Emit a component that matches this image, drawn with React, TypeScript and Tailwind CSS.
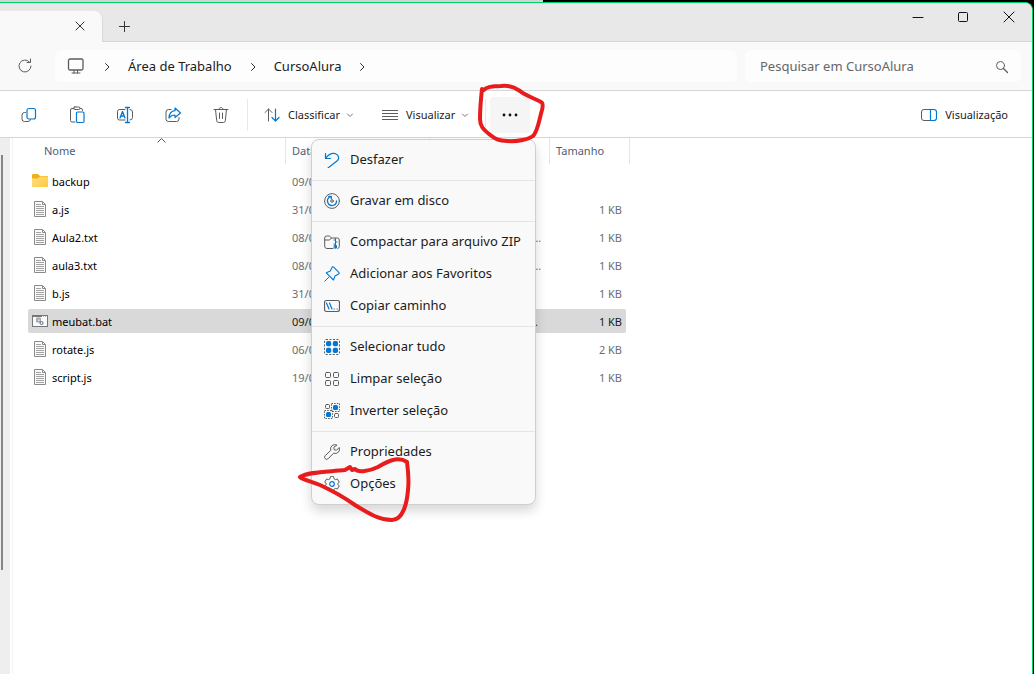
import React, { useState } from "react";

interface IconProps {
  children: React.ReactNode;
  size?: number;
}

const Icon: React.FC<IconProps> = ({ children, size = 18 }) => (
  <svg
    width={size}
    height={size}
    viewBox={`0 0 ${size} ${size}`}
    fill="none"
    stroke="#5c5c5c"
    strokeLinecap="round"
    strokeLinejoin="round"
    className="shrink-0"
    aria-hidden="true"
  >
    {children}
  </svg>
);

const BLUE = "#0078d4";

const CopyIcon = () => (
  <Icon>
    <path d="M5.500 6.500H4.500A2.500 2.500 0 0 0 2 9v4a2.500 2.500 0 0 0 2.500 2.500h3.500A2.500 2.500 0 0 0 10.500 13.500" />
    <rect x="7" y="2.500" width="8.500" height="10.500" rx="2" stroke={BLUE} strokeWidth="1.200" />
  </Icon>
);

const PasteIcon = () => (
  <Icon>
    <path d="M6 2.500H4A1.500 1.500 0 0 0 2.500 4v10.500A1.500 1.500 0 0 0 4 16h3M12 2.500h1A1.500 1.500 0 0 1 14.500 4v.5" />
    <rect x="5.500" y="1" width="6.500" height="2.500" rx="1.200" />
    <rect x="8.500" y="6" width="7.500" height="10.500" rx="1.200" stroke={BLUE} strokeWidth="1.200" />
  </Icon>
);

const RenameIcon = () => (
  <Icon>
    <path d="M9 3.500H3.500A2 2 0 0 0 1.500 5.500v6.500a2 2 0 0 0 2 2H9M14 3.500a2.500 2.500 0 0 1 2.500 2.500v5.500A2.500 2.500 0 0 1 14 14" />
    <path d="M4 12 6.500 5.500 9 12M4.800 10h3.400M11.500 1.500v15M9.500 1.500h4M9.500 16.500h4" stroke={BLUE} strokeWidth="1.300" />
  </Icon>
);

const ShareIcon = () => (
  <Icon>
    <path d="M7 3.500H4.500A2.500 2.500 0 0 0 2 6v7A2.500 2.500 0 0 0 4.500 15.500h8a2.500 2.500 0 0 0 2.500-2.500V11.500" />
    <path d="M11 2 16.500 7 11 11.500V9C8 9 6.500 10 5 12c.2-4 2.500-7 6-7.300z" stroke={BLUE} strokeWidth="1.200" />
  </Icon>
);

const TrashIcon = () => (
  <Icon>
    <path d="M2 3.500h14M7 3.300c0-2.500 4-2.500 4 0M3.500 3.500l1.200 11.200A2 2 0 0 0 6.700 16.500h4.600a2 2 0 0 0 2-1.800l1.200-11.200M7.500 7v5.500M10.500 7v5.500" />
  </Icon>
);

const SortIcon = () => (
  <Icon size={16}>
    <path d="M4.500 14V2M1 5.500 4.500 2 8 5.500" />
    <path d="M11.500 2v12M8 10.500l3.500 3.500L15 10.500" stroke={BLUE} strokeWidth="1.200" />
  </Icon>
);

const LinesIcon = () => (
  <Icon size={16}>
    <path d="M0 3.500h16M0 6.500h16M0 9.500h16M0 12.500h16" />
  </Icon>
);

const PreviewIcon = () => (
  <Icon size={16}>
    <path d="M10 2.500H3A2.500 2.500 0 0 0 .5 5v6A2.500 2.500 0 0 0 3 13.500h7" />
    <path d="M9.500 2.500H13A2.500 2.500 0 0 1 15.500 5v6a2.500 2.500 0 0 1-2.500 2.500H9.500z" stroke={BLUE} strokeWidth="1.200" />
  </Icon>
);

const ChevronDown = () => (
  <Icon size={8}>
    <path d="M1.500 3 4 5.500 6.500 3" stroke="#777" />
  </Icon>
);

const ChevronRight = () => (
  <Icon size={10}>
    <path d="M3.500 1.500 7 5 3.500 8.500" stroke="#333" />
  </Icon>
);

const UndoIcon = () => (
  <Icon size={16}>
    <path d="M1.500 1.500v5h5M1.700 6.300C4.500 2.500 8 .8 11.500 1.700c3.300 1 4 4.500 2 6.800L4 16" stroke={BLUE} strokeWidth="1.200" />
  </Icon>
);

const DiscIcon = () => (
  <Icon size={16}>
    <circle cx="8" cy="8" r="7.400" />
    <circle cx="8" cy="8" r="1.300" />
    <path d="M6 4A4.500 4.500 0 1 0 12.500 8M4.800 3.500h2.500v2.300" stroke={BLUE} strokeWidth="1.300" />
  </Icon>
);

const ZipIcon = () => (
  <Icon size={16}>
    <path d="M9 14.500H3A2.300 2.300 0 0 1 .7 12.200V4A2 2 0 0 1 2.700 2h2.600L7.500 4 5.600 6H.7M7.500 4H13.300a2 2 0 0 1 2 2v6.500a2 2 0 0 1-1.500 2" />
    <path d="M11.500 4.500V14M10 6h1.500M11.500 8H13M10 10h1.500M10.500 14h2v-2.500h-2z" stroke={BLUE} />
  </Icon>
);

const PinIcon = () => (
  <Icon size={16}>
    <path d="M5 11 .7 15.300" />
    <path d="M9.700 1.200 14.800 6.300c.6.600.4 1.500-.3 1.800L11 10l-1.500 4L2.300 6.800 6.300 5 8 1.500c.3-.7 1.100-.9 1.700-.3z" stroke={BLUE} strokeWidth="1.100" />
  </Icon>
);

const PathIcon = () => (
  <Icon size={16}>
    <rect x=".5" y="2.500" width="15" height="11" rx="2" strokeWidth="1.200" />
    <path d="M2.500 5 5 11M5.500 5 8 11M10 11h.3M13 11h.3" stroke={BLUE} strokeWidth="1.200" />
  </Icon>
);

const SelectAllIcon = () => (
  <Icon size={16}>
    <rect x=".5" y=".5" width="15" height="15" rx="1.500" strokeDasharray="2 1.500" strokeLinecap="butt" />
    <g fill={BLUE} stroke="none">
      <rect x="2" y="2" width="5.200" height="5.200" rx="1.800" />
      <rect x="8.800" y="2" width="5.200" height="5.200" rx="1.800" />
      <rect x="2" y="8.800" width="5.200" height="5.200" rx="1.800" />
      <rect x="8.800" y="8.800" width="5.200" height="5.200" rx="1.800" />
    </g>
  </Icon>
);

const SelectNoneIcon = () => (
  <Icon size={16}>
    <rect x="1.500" y="1.500" width="5" height="5" rx="1" />
    <rect x="9.500" y="1.500" width="5" height="5" rx="1" />
    <rect x="1.500" y="9.500" width="5" height="5" rx="1" />
    <rect x="9.500" y="9.500" width="5" height="5" rx="1" />
  </Icon>
);

const InvertIcon = () => (
  <Icon size={16}>
    <rect x="1.500" y="1.500" width="4" height="4" rx="1" />
    <rect x="10.500" y="10.500" width="4" height="4" rx="1" />
    <rect x="7.500" y=".5" width="8" height="8" strokeDasharray="1.500 1.200" strokeLinecap="butt" />
    <rect x=".5" y="7.500" width="8" height="8" strokeDasharray="1.500 1.200" strokeLinecap="butt" />
    <rect x="9" y="2" width="5" height="5" rx="1.500" fill={BLUE} stroke="none" />
    <rect x="2" y="9" width="5" height="5" rx="1.500" fill={BLUE} stroke="none" />
  </Icon>
);

const WrenchIcon = () => (
  <Icon size={16}>
    <path d="M12.700 1A4.300 4.300 0 0 0 6.800 6.300L1.200 11.700a2 2 0 0 0 2.900 3l5.600-5.500A4.300 4.300 0 0 0 15.200 3.500L12.500 6.200 10.200 5.800 9.900 3.600z" />
  </Icon>
);

const GearIcon = () => (
  <Icon size={16}>
    <path d="M6.500 .7 6 2.700 4.600 3.600 2.600 3 .7 6.200 2.200 7.400V8.600L.7 9.800 2.600 13 4.600 12.400 6 13.300 6.500 15.300H9.500L10 13.300 11.400 12.400 13.400 13 15.300 9.800 13.800 8.600V7.400L15.300 6.200 13.400 3 11.400 3.600 10 2.700 9.500 .7z" />
    <circle cx="8" cy="8" r="2.300" stroke={BLUE} strokeWidth="1.200" />
  </Icon>
);

const FolderIcon = () => (
  <svg width="16" height="16" viewBox="0 0 16 16" aria-hidden="true" className="shrink-0">
    <defs>
      <linearGradient id="folder" x1="0" y1="0" x2="1" y2="1">
        <stop offset="0" stopColor="#ffe08a" />
        <stop offset="1" stopColor="#ffc937" />
      </linearGradient>
    </defs>
    <path d="M0 2a1 1 0 0 1 1-1h5l2 2h7a1 1 0 0 1 1 1v4H0z" fill="#f4b012" />
    <path d="M0 5.500h6L8 3.500h7a1 1 0 0 1 1 1V13a1 1 0 0 1-1 1H1a1 1 0 0 1-1-1z" fill="url(#folder)" />
  </svg>
);

const FileIcon = () => (
  <svg width="16" height="16" viewBox="0 0 16 16" fill="none" aria-hidden="true" className="shrink-0">
    <path d="M2.500 .5h8l3 3v12h-11z" fill="#fafafa" stroke="#8a8a8a" />
    <path d="M10.500 .5v3h3" stroke="#8a8a8a" />
    <path d="M4 3.500h5M4 5.500h8M4 7.500h8M4 9.500h8M4 11.500h8M4 13.500h8" stroke="#a3a3a3" />
  </svg>
);

const BatIcon = () => (
  <svg width="16" height="16" viewBox="0 0 16 16" fill="none" aria-hidden="true" className="shrink-0">
    <rect x=".5" y="2.500" width="15" height="11" fill="#fafafa" stroke="#777" />
    <path d="M0 3h10" stroke="#777" strokeWidth="2" />
    <path d="M11 3h1M13 3h1" stroke="#777" />
    <rect x="4" y="4.500" width="5" height="5" rx="1" fill="#9eabb6" />
    <rect x="6" y="6.500" width="1.500" height="1.500" fill="#e5eaee" />
    <circle cx="9.500" cy="10" r="1.500" stroke="#5d6770" />
  </svg>
);

interface FileRow {
  name: string;
  date: string;
  type: string;
  size: string;
  icon: React.ReactNode;
}

const files: FileRow[] = [
  { name: "backup", date: "09/03", type: "", size: "", icon: <FolderIcon /> },
  { name: "a.js", date: "31/01", type: "", size: "1 KB", icon: <FileIcon /> },
  { name: "Aula2.txt", date: "08/03", type: "Documento de Texto", size: "1 KB", icon: <FileIcon /> },
  { name: "aula3.txt", date: "08/03", type: "Documento de Texto", size: "1 KB", icon: <FileIcon /> },
  { name: "b.js", date: "31/01", type: "", size: "1 KB", icon: <FileIcon /> },
  { name: "meubat.bat", date: "09/03", type: "Arquivo em Lotes do Windows", size: "1 KB", icon: <BatIcon /> },
  { name: "rotate.js", date: "06/02", type: "", size: "2 KB", icon: <FileIcon /> },
  { name: "script.js", date: "19/01", type: "", size: "1 KB", icon: <FileIcon /> },
];

const menuGroups = [
  [{ label: "Desfazer", icon: <UndoIcon /> }],
  [{ label: "Gravar em disco", icon: <DiscIcon /> }],
  [
    { label: "Compactar para arquivo ZIP", icon: <ZipIcon /> },
    { label: "Adicionar aos Favoritos", icon: <PinIcon /> },
    { label: "Copiar caminho", icon: <PathIcon /> },
  ],
  [
    { label: "Selecionar tudo", icon: <SelectAllIcon /> },
    { label: "Limpar seleção", icon: <SelectNoneIcon /> },
    { label: "Inverter seleção", icon: <InvertIcon /> },
  ],
  [
    { label: "Propriedades", icon: <WrenchIcon /> },
    { label: "Opções", icon: <GearIcon /> },
  ],
];

const MoreMenu = () => (
  <div className="absolute top-[42px] -right-1.5 z-10 w-[225px] rounded-lg border border-[#cfcfcf] bg-[#f9f9f9] py-1 shadow-[0_6px_12px_rgba(0,0,0,0.16)]">
    {menuGroups.map((group, i) => (
      <ul key={i} className={i > 0 ? "mt-1 border-t border-[#e5e5e5] pt-1" : ""}>
        {group.map((item) => (
          <li key={item.label} className="relative">
            <button className="flex h-8 w-full items-center gap-2.5 pl-3 text-[13px] whitespace-nowrap text-[#1b1b1b]">
              {item.icon}
              {item.label}
            </button>
            {item.label === "Opções" && (
              <svg
                width="120"
                height="70"
                viewBox="295 454 120 70"
                fill="none"
                stroke="#e81c1c"
                strokeWidth="4"
                strokeLinecap="round"
                strokeLinejoin="round"
                className="pointer-events-none absolute -top-3.5 -left-[17px] max-w-none"
                aria-hidden="true"
              >
                <path d="M300 477C308 472 325 472 345 470L350 467 352 470 355 469C358 473 370 471 378 467 388 461 398 456 407 462 408 470 409 482 408 490 407 503 403 520 392 520 380 520 371 515 355 505 345 498 333 491 320 485 310 481 303 480 300 477" />
              </svg>
            )}
          </li>
        ))}
      </ul>
    ))}
  </div>
);

const TitleBar = () => (
  <div className="flex h-[39px] bg-[#e8e8e8]">
    <div className="flex h-[31px] w-[103px] items-center justify-end self-end rounded-tr-lg border-r border-[#dadada] bg-[#f9f9f9] pr-4 pb-0.5">
      <button aria-label="Fechar guia">
        <Icon size={12}>
          <path d="M2 2l8 8M10 2l-8 8" stroke="#333" />
        </Icon>
      </button>
    </div>
    <div className="flex flex-1 justify-between border-b border-[#d6d6d6]">
      <button aria-label="Nova guia" className="mt-2 ml-[15px] self-center">
        <Icon size={13}>
          <path d="M6.500 1.500v10M1.500 6.500h10" stroke="#333" />
        </Icon>
      </button>
      <div className="flex h-7 items-center">
        <button aria-label="Minimizar" className="flex w-[45px] justify-center">
          <Icon size={12}>
            <path d="M1 6.500h10" stroke="#111" />
          </Icon>
        </button>
        <button aria-label="Maximizar" className="flex w-[45px] justify-center">
          <Icon size={12}>
            <rect x="1.500" y="1.500" width="9" height="9" rx="1" stroke="#111" />
          </Icon>
        </button>
        <button aria-label="Fechar" className="flex w-[47px] justify-center">
          <Icon size={12}>
            <path d="M1 1l10 10M11 1 1 11" stroke="#111" />
          </Icon>
        </button>
      </div>
    </div>
  </div>
);

const AddressBar = () => (
  <div className="flex h-[49px] items-center border-b border-[#d6d6d6] bg-[#f9f9f9] pr-[11px]">
    <button aria-label="Atualizar" className="flex w-[55px] pl-4">
      <Icon>
        <path d="M13.500 5A6 6 0 1 0 15 9M14.500 2v3.500H11" />
      </Icon>
    </button>
    <nav className="flex h-8 flex-1 items-center rounded-md bg-[#fdfdfd] pt-0.5 pl-3 text-[13px] text-[#1b1b1b]">
      <Icon>
        <rect x="1.500" y="1" width="14.500" height="11" rx="1.500" strokeWidth="1.300" />
        <path d="M7 12.500v2.500M10.500 12.500v2.500M5 15h8" />
      </Icon>
      <span className="flex w-[43px] justify-center">
        <ChevronRight />
      </span>
      <a href="#desktop">Área de Trabalho</a>
      <span className="flex w-[42px] justify-center">
        <ChevronRight />
      </span>
      <a href="#curso">CursoAlura</a>
      <span className="flex w-[42px] justify-center">
        <ChevronRight />
      </span>
    </nav>
    <div className="ml-2 flex h-8 w-[276px] items-center rounded-md bg-[#fdfdfd] pt-0.5 pr-3 pl-[15px]">
      <input
        aria-label="Pesquisar"
        placeholder="Pesquisar em CursoAlura"
        className="min-w-0 flex-1 bg-transparent text-[13px] outline-none placeholder:text-[#666]"
      />
      <Icon size={14}>
        <circle cx="5.500" cy="5.500" r="4" />
        <path d="M8.500 8.500 12.500 12.500" strokeWidth="1.200" />
      </Icon>
    </div>
  </div>
);

const Toolbar = () => {
  const [isOpen, setIsOpen] = useState(true);

  const actions = [
    { label: "Copiar", icon: <CopyIcon /> },
    { label: "Colar", icon: <PasteIcon /> },
    { label: "Renomear", icon: <RenameIcon /> },
    { label: "Compartilhar", icon: <ShareIcon /> },
    { label: "Excluir", icon: <TrashIcon /> },
  ];

  return (
    <div className="flex h-[47px] items-center border-b border-[#d6d6d6] bg-white pt-0.5 pl-[5px] text-[11px] text-[#1b1b1b]">
      {actions.map((action) => (
        <button key={action.label} aria-label={action.label} className="flex h-9 w-12 items-center justify-center">
          {action.icon}
        </button>
      ))}
      <div className="ml-0.5 h-8 w-px bg-[#e8e8e8]" />
      <button className="ml-2 flex h-9 w-[110px] items-center gap-1.5 pl-2">
        <SortIcon />
        <span className="pl-0.5">Classificar</span>
        <ChevronDown />
      </button>
      <button className="ml-2 flex h-9 w-[103px] items-center gap-1.5 pl-2">
        <LinesIcon />
        <span className="pl-0.5">Visualizar</span>
        <ChevronDown />
      </button>
      <div className="ml-2 h-8 w-px bg-[#e8e8e8]" />
      <div className="relative ml-1">
        <button
          aria-label="Ver mais"
          aria-expanded={isOpen}
          onClick={() => setIsOpen(!isOpen)}
          className="flex h-9 w-10 items-center justify-center rounded bg-[#f5f5f5]"
        >
          <svg width="18" height="4" viewBox="0 0 18 4" fill="#111" aria-hidden="true">
            <circle cx="3" cy="2" r="1.400" />
            <circle cx="9" cy="2" r="1.400" />
            <circle cx="15" cy="2" r="1.400" />
          </svg>
        </button>
        {isOpen && <MoreMenu />}
        <svg
          width="72"
          height="62"
          viewBox="475 82 72 62"
          fill="none"
          stroke="#e81c1c"
          strokeWidth="4"
          strokeLinecap="round"
          strokeLinejoin="round"
          className="pointer-events-none absolute -top-[15px] -left-[15px] z-20 max-w-none"
          aria-hidden="true"
        >
          <path d="M482 89C481 98 480 108 480 119 480 126 483 129 489 134 495 139 499 141 507 141 518 142 529 139 533 136 538 131 539 120 542 110 543 106 543 103 541 102 534 98 526 96 520 91 513 86 507 85 501 86 493 86 486 87 484 90" />
        </svg>
      </div>
      <button className="mr-6 ml-auto flex h-9 items-center gap-2">
        <PreviewIcon />
        Visualização
      </button>
    </div>
  );
};

const FileTable = () => {
  const [selected, setSelected] = useState("meubat.bat");

  return (
    <table className="ml-[15px] w-[602px] table-fixed border-separate border-spacing-0 text-left text-[11px]">
      <thead>
        <tr className="h-[26px] text-[#4c607a]">
          <th className="relative w-[258px] border-r border-[#e5e5e5] pl-4 font-normal">
            Nome
            <svg width="9" height="5" viewBox="0 0 9 5" fill="none" stroke="#555" className="absolute top-0 left-[129px]" aria-hidden="true">
              <path d="M.5 4.500 4.500 .5 8.500 4.500" />
            </svg>
          </th>
          <th className="w-36 border-r border-[#e5e5e5] pl-1.5 font-normal">Data</th>
          <th className="w-[120px] border-r border-[#e5e5e5] pl-1.5 font-normal">Tipo</th>
          <th className="w-20 border-r border-[#e5e5e5] pl-1.5 font-normal">Tamanho</th>
        </tr>
      </thead>
      <tbody className="before:block before:h-[3px]">
        {files.map((file) => {
          const isSelected = file.name === selected;
          const bg = isSelected ? "bg-[#d9d9d9] text-[#1b1b1b]" : "text-[#6d6d6d]";
          return (
            <tr key={file.name} onClick={() => setSelected(file.name)}>
              <td className="py-0.5">
                <div className={`flex h-6 items-center gap-1 rounded-l-xs pl-1 ${bg}`}>
                  {file.icon}
                  <span className="pt-0.5 text-black">{file.name}</span>
                </div>
              </td>
              <td className="py-0.5">
                <div className={`h-6 pl-1.5 leading-[26px] ${bg}`}>{file.date}</div>
              </td>
              <td className="py-0.5">
                <div className={`h-6 truncate pr-2 pl-1.5 leading-[26px] ${bg}`}>{file.type}</div>
              </td>
              <td className="py-0.5 pr-1">
                <div className={`h-6 rounded-r-xs pr-1 text-right leading-[26px] ${bg}`}>{file.size}</div>
              </td>
            </tr>
          );
        })}
      </tbody>
    </table>
  );
};

export default function App() {
  return (
    <div className="flex min-h-screen flex-col bg-black pr-px font-['Noto_Sans','Open_Sans',sans-serif]">
      <div className="h-0.5 w-[543px] bg-[#cfd3d6]" />
      <div className="flex flex-1 flex-col overflow-hidden rounded-tr-lg border-t border-r border-[#00d26a] bg-white">
        <TitleBar />
        <AddressBar />
        <Toolbar />
        <div className="flex flex-1">
          <div className="w-2.5 bg-[#eeeeee] pt-[17px] pl-px">
            <div className="h-[415px] w-0.5 bg-[#868686]" />
          </div>
          <div className="ml-0.5 flex-1 border-l border-[#f3f3f3]">
            <FileTable />
          </div>
        </div>
      </div>
    </div>
  );
}
